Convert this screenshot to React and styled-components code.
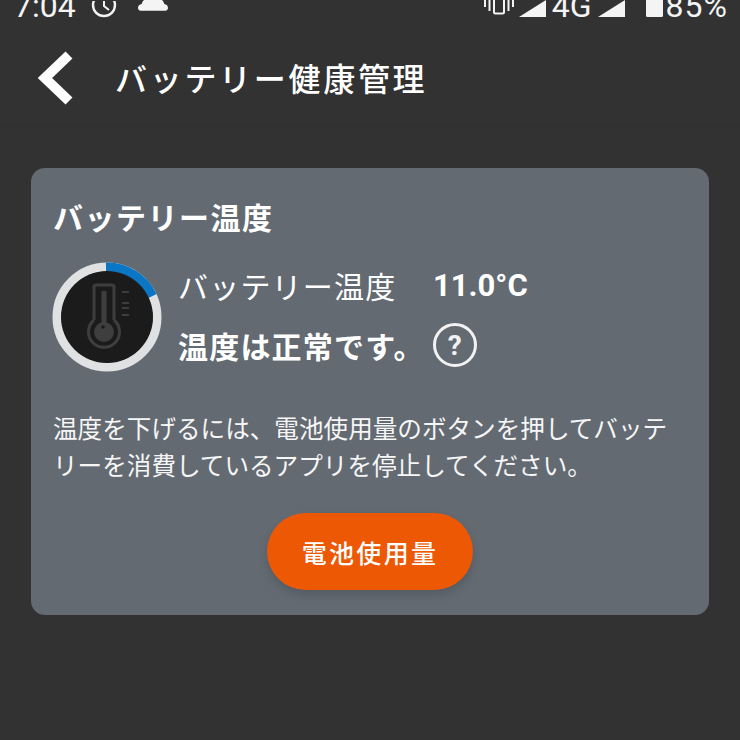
import React from "react";
import styled, { createGlobalStyle } from "styled-components";

const GlobalStyle = createGlobalStyle`
    html, body {
        margin: 0;
        padding: 0;
        background: #323232;
    }
    * {
        box-sizing: border-box;
    }
`;

const Screen = styled.div`
    width: 740px;
    height: 740px;
    overflow: hidden;
    background: #323232;
    color: #fff;
    font-family: Roboto, "Noto Sans CJK JP", sans-serif;
`;

const StatusBar = styled.div`
    height: 18px;
    padding: 0 12px 0 14px;
    display: flex;
    align-items: flex-end;
    justify-content: space-between;
    overflow: hidden;
`;

const StatusGroup = styled.div`
    display: flex;
    align-items: flex-end;
`;

const StatusText = styled.span`
    font-size: 32px;
    line-height: 22px;
    height: 22px;
    margin-bottom: 1px;
    margin-left: ${props => props.$left || 0}px;
    letter-spacing: ${props => props.$spacing || 0}px;
    color: #f4f4f4;
    white-space: nowrap;
`;

const StatusIcon = styled.svg`
    flex: none;
    fill: ${props => props.$outline ? "none" : "#f4f4f4"};
    stroke: ${props => props.$outline ? "#f4f4f4" : "none"};
    margin-left: ${props => props.$left || 0}px;
    margin-bottom: ${props => props.$bottom || 0}px;
`;

const Header = styled.div`
    height: 109px;
    padding: 33px 0 0 38px;
    display: flex;
    align-items: flex-start;
    border-bottom: 1px solid #2f2f2f;
`;

const BackIcon = styled.svg`
    width: 36px;
    height: 54px;
    flex: none;
`;

const Title = styled.h1`
    margin: 7px 0 0 41px;
    font-size: 32px;
    line-height: 44px;
    font-weight: 500;
    letter-spacing: 2.7px;
    white-space: nowrap;
`;

const Card = styled.section`
    margin: 41px 0 0 31px;
    width: 678px;
    height: 447px;
    padding: 29px 23px 0;
    background: #636a72;
    border-radius: 14px;
`;

const CardTitle = styled.h2`
    margin: 0 0 0 -1px;
    font-size: 30px;
    line-height: 44px;
    font-weight: 700;
    letter-spacing: 1.5px;
    white-space: nowrap;
`;

const TempRow = styled.div`
    margin: 18px 0 0 -3px;
    display: flex;
    align-items: flex-start;
    gap: 15px;
`;

const Gauge = styled.svg`
    width: 112px;
    height: 112px;
    flex: none;
    margin-top: 2px;
`;

const TempInfo = styled.div`
    display: flex;
    flex-direction: column;
    gap: 16px;
    padding-top: 4px;
`;

const TempLine = styled.div`
    display: flex;
    align-items: center;
    height: 44px;
    white-space: nowrap;
`;

const TempLabel = styled.span`
    font-size: 30px;
    letter-spacing: 1.2px;
    width: 255px;
`;

const TempValue = styled.span`
    font-size: 31px;
    font-weight: 700;
`;

const TempStatus = styled.span`
    font-size: 30px;
    font-weight: 700;
    letter-spacing: 1.2px;
`;

const HelpIcon = styled.span`
    margin-left: 8px;
    width: 44px;
    height: 44px;
    border-radius: 50%;
    border: 3.5px solid #f2f2f2;
    display: flex;
    align-items: center;
    justify-content: center;
    font-size: 28px;
    font-weight: 700;
    color: #f2f2f2;
`;

const Description = styled.p`
    margin: 38px 0 0 -1px;
    width: 622px;
    font-size: 24.6px;
    line-height: 37px;
    color: #f6f6f6;
`;

const ButtonRow = styled.div`
    margin-top: 28px;
    display: flex;
    justify-content: center;
`;

const UsageButton = styled.button`
    width: 206px;
    height: 77px;
    border: none;
    border-radius: 39px;
    background: #ec5804;
    color: #fff;
    font-family: inherit;
    font-size: 25px;
    font-weight: 500;
    letter-spacing: 2.3px;
    box-shadow: 0 5px 10px rgba(0, 0, 0, 0.14);
`;

const App = () => (
    <Screen>
        <GlobalStyle />
        <StatusBar>
            <StatusGroup>
                <StatusText>7:04</StatusText>
                <StatusIcon $outline $left={15} width="26" height="17" viewBox="0 0 26 17" strokeWidth="2.4">
                    <circle cx="13" cy="4" r="11" />
                    <path d="M13 -1v6l5 4" strokeWidth="2" />
                </StatusIcon>
                <StatusIcon $left={21} $bottom={7} width="30" height="11" viewBox="0 0 32 11">
                    <path d="M0 8c0-2 1.500-3.500 4-4C5-1 8-2 16-2s11 1 12 6c2.500.5 4 2 4 4 0 2-1 3-3 3H3c-2 0-3-1-3-3z" />
                </StatusIcon>
            </StatusGroup>
            <StatusGroup>
                <StatusIcon $outline $bottom={3} width="30" height="16" viewBox="0 0 30 16" strokeWidth="2">
                    <path d="M1 0v8M5.500 0v12M24.500 0v12M29 0v8" />
                    <path d="M10 -3v16a1.500 1.500 0 0 0 1.500 1.500h7a1.500 1.500 0 0 0 1.500-1.500V-3" />
                </StatusIcon>
                <StatusIcon $left={5} width="27" height="18" viewBox="0 0 27 18">
                    <path d="M0 17L27 0v17z" />
                </StatusIcon>
                <StatusText $left={6}>4G</StatusText>
                <StatusIcon $left={6} width="27" height="18" viewBox="0 0 27 18">
                    <path d="M0 17L27 0v17z" />
                </StatusIcon>
                <StatusIcon $left={21} width="17" height="18" viewBox="0 0 17 18">
                    <rect x="0" y="-3" width="17" height="20" rx="1.500" />
                </StatusIcon>
                <StatusText $left={3} $spacing={1}>85%</StatusText>
            </StatusGroup>
        </StatusBar>
        <Header>
            <BackIcon viewBox="0 0 36 54">
                <path d="M31 4L7 27l24 23" fill="none" stroke="#fff" strokeWidth="10" />
            </BackIcon>
            <Title>バッテリー健康管理</Title>
        </Header>
        <Card>
            <CardTitle>バッテリー温度</CardTitle>
            <TempRow>
                <Gauge viewBox="0 0 112 112">
                    <circle cx="56" cy="56" r="50" fill="none" stroke="#dfe1e2" strokeWidth="9" />
                    <path d="M55 6A50 50 0 0 1 101.500 35" fill="none" stroke="#0b76c4" strokeWidth="9" />
                    <circle cx="56" cy="56" r="46" fill="#1b1b1b" />
                    <g fill="none" stroke="#3e3e3e" strokeWidth="3">
                        <path d="M43 59V26a2 2 0 0 1 2-2h16a2 2 0 0 1 2 2v33" />
                        <path d="M43 59a15.500 15.500 0 1 0 20 0" />
                        <circle cx="53" cy="71" r="10" fill="#3e3e3e" stroke="none" />
                        <path d="M53 30v34" strokeWidth="5" />
                        <path d="M71 31h7M71 42h7M71 47h7M71 54h7" strokeWidth="2" />
                    </g>
                    <circle cx="52" cy="66" r="1.800" fill="#1b1b1b" />
                </Gauge>
                <TempInfo>
                    <TempLine>
                        <TempLabel>バッテリー温度</TempLabel>
                        <TempValue>11.0°C</TempValue>
                    </TempLine>
                    <TempLine>
                        <TempStatus>温度は正常です。</TempStatus>
                        <HelpIcon>?</HelpIcon>
                    </TempLine>
                </TempInfo>
            </TempRow>
            <Description>
                温度を下げるには、電池使用量のボタンを押してバッテリーを消費しているアプリを停止してください。
            </Description>
            <ButtonRow>
                <UsageButton>電池使用量</UsageButton>
            </ButtonRow>
        </Card>
    </Screen>
);

export default App;
